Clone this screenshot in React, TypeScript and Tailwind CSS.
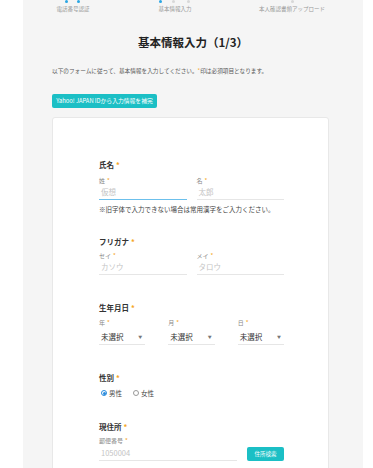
import React from "react";

const Req = () => <span className="text-[#f5a623] ml-[2px]">*</span>;

function SectionLabel({ children }: { children: React.ReactNode }) {
  return (
    <div className="text-[7.5px] leading-[10px] font-bold text-[#333]">
      {children}
      <Req />
    </div>
  );
}

function SubLabel({ children }: { children: React.ReactNode }) {
  return (
    <div className="text-[6px] leading-[8px] text-[#888]">
      {children}
      <Req />
    </div>
  );
}

function Input({ placeholder, focused }: { placeholder: string; focused?: boolean }) {
  return (
    <div
      className={
        "h-[15px] flex items-center pl-[2px] text-[7.5px] text-[#c4c4c4] border-b " +
        (focused ? "border-[#6cc0ec]" : "border-[#e6e6e6]")
      }
    >
      {placeholder}
    </div>
  );
}

function Select() {
  return (
    <div className="h-[16px] flex items-center justify-between pl-[2px] pr-[3px] text-[7.5px] text-[#333] border-b border-[#e6e6e6]">
      <span>未選択</span>
      <span className="text-[4px] text-[#777]">▼</span>
    </div>
  );
}

function Dot({ color, ml }: { color: string; ml: string }) {
  return <div className={"shrink-0 w-[3px] h-[3px] rounded-full " + color + " " + ml} />;
}

export default function App() {
  return (
    <div
      className="min-h-screen bg-white"
      style={{ fontFamily: '"Noto Sans CJK JP", "Noto Sans", sans-serif' }}
    >
      <div className="ml-[23px] w-[340px] bg-[#f5f5f5] min-h-[468px] overflow-hidden">
        {/* stepper */}
        <div className="flex h-[3px] items-start overflow-hidden">
          <Dot color="bg-[#2aa6e3]" ml="ml-[42px]" />
          <Dot color="bg-[#2aa6e3]" ml="ml-[9px]" />
          <Dot color="bg-[#2aa6e3]" ml="ml-[79px]" />
          <Dot color="bg-[#d8d8d8]" ml="ml-[10px]" />
          <Dot color="bg-[#d8d8d8]" ml="ml-[12px]" />
          <Dot color="bg-[#d8d8d8]" ml="ml-[101px]" />
        </div>
        <div className="flex mt-[3px] text-[5.5px] leading-[6px] text-[#9a9a9a]">
          <div className="w-[100px] text-center">電話番号認証</div>
          <div className="w-[104px] text-center">基本情報入力</div>
          <div className="w-[130px] text-center">本人確認書類アップロード</div>
        </div>

        {/* title */}
        <div className="mt-[23px] text-center text-[11.5px] leading-[14px] font-bold text-[#222]">
          基本情報入力（1/3）
        </div>

        <div className="mt-[18px] ml-[29px] text-[5.65px] leading-[8px] text-[#555]">
          以下のフォームに従って、基本情報を入力してください。
          <span className="text-[#f5a623]">*</span>印は必須項目となります。
        </div>

        <div className="mt-[19px] ml-[29px] flex">
          <button className="h-[14px] w-[105px] rounded-[2px] bg-[#1bbfc5] text-white text-[5.8px] leading-[14px] text-center">
            Yahoo! JAPAN IDから入力情報を補完
          </button>
        </div>

        {/* card */}
        <div className="mt-[9px] ml-[29px] w-[277px] h-[400px] bg-white border border-[#e8e8e8] rounded-[3px] pt-[42px] pl-[46px] pr-[45px]">
          <div className="w-[185px]">
            <SectionLabel>氏名</SectionLabel>
            <div className="mt-[7px] grid grid-cols-2 gap-x-[10px]">
              <div>
                <SubLabel>姓</SubLabel>
                <Input placeholder="仮想" focused />
              </div>
              <div>
                <SubLabel>名</SubLabel>
                <Input placeholder="太郎" />
              </div>
            </div>
            <div className="mt-[5px] text-[6.5px] leading-[8px] text-[#444] whitespace-nowrap">
              ※旧字体で入力できない場合は常用漢字をご入力ください。
            </div>

            <div className="mt-[24px]">
              <SectionLabel>フリガナ</SectionLabel>
            </div>
            <div className="mt-[5px] grid grid-cols-2 gap-x-[10px]">
              <div>
                <SubLabel>セイ</SubLabel>
                <Input placeholder="カソウ" />
              </div>
              <div>
                <SubLabel>メイ</SubLabel>
                <Input placeholder="タロウ" />
              </div>
            </div>

            <div className="mt-[28px]">
              <SectionLabel>生年月日</SectionLabel>
            </div>
            <div className="mt-[6px] grid grid-cols-3 gap-x-[23px]">
              {["年", "月", "日"].map((l) => (
                <div key={l}>
                  <SubLabel>{l}</SubLabel>
                  <div className="mt-[2px]">
                    <Select />
                  </div>
                </div>
              ))}
            </div>

            <div className="mt-[28px]">
              <SectionLabel>性別</SectionLabel>
            </div>
            <div className="mt-[5px] flex items-center text-[6.5px] leading-[10px] text-[#444]">
              <span className="ml-[2px] w-[6px] h-[6px] rounded-full border border-[#2a8bdc] flex items-center justify-center">
                <span className="w-[3px] h-[3px] rounded-full bg-[#2a8bdc]" />
              </span>
              <span className="ml-[2px]">男性</span>
              <span className="ml-[11px] w-[6px] h-[6px] rounded-full border border-[#999]" />
              <span className="ml-[2px]">女性</span>
            </div>

            <div className="mt-[24px]">
              <SectionLabel>現住所</SectionLabel>
            </div>
            <div className="mt-[5px]">
              <SubLabel>郵便番号</SubLabel>
            </div>
            <div className="mt-[1px] flex items-end gap-x-[10px]">
              <div className="w-[138px]">
                <Input placeholder="1050004" />
              </div>
              <button className="h-[14px] w-[37px] rounded-[2px] bg-[#1bbfc5] text-white text-[5.5px] leading-[14px] text-center">
                住所検索
              </button>
            </div>
          </div>
        </div>
      </div>
    </div>
  );
}
